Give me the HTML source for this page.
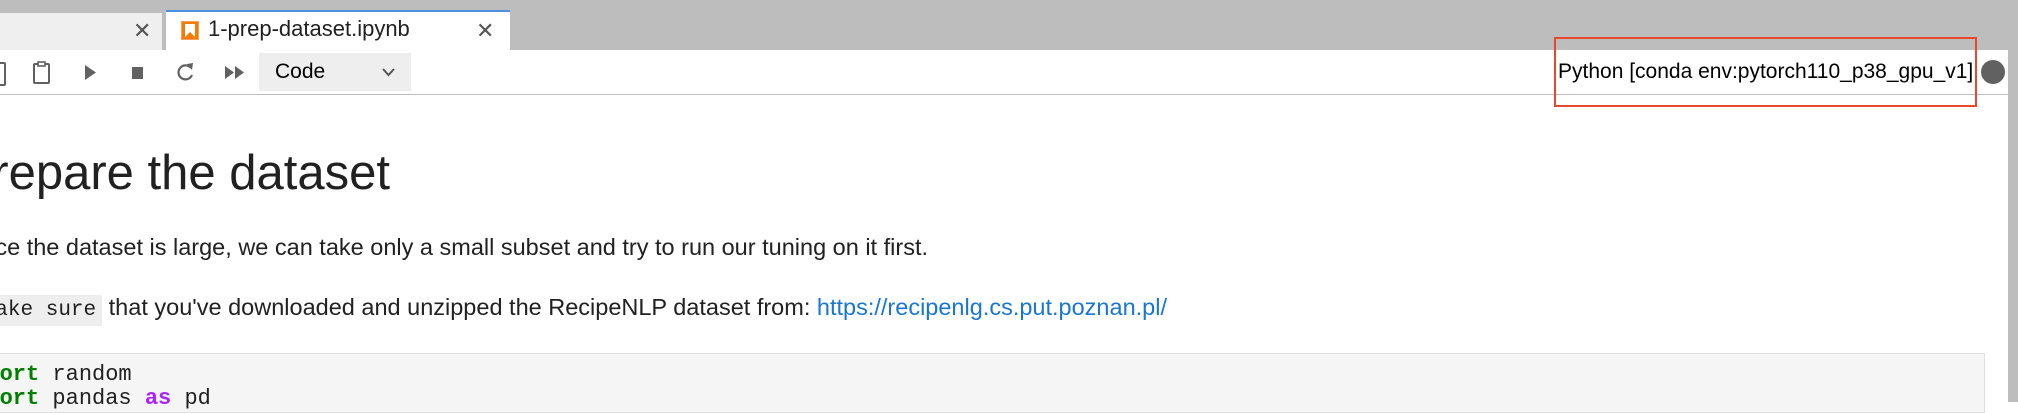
<!DOCTYPE html>
<html><head><meta charset="utf-8"><style>
body{margin:0;width:2018px;height:402px;overflow:hidden;background:#fff;position:relative;font-family:"Liberation Sans",Arial,sans-serif;color:#212121}
.a{position:absolute;white-space:nowrap}
</style></head><body>
<div class="a" style="left:0;top:0;width:2018px;height:50px;background:#bdbdbd"></div>
<div class="a" style="left:0;top:13px;width:162px;height:37px;background:#efefef"></div>
<div class="a" style="left:133px;top:18px;font-size:22px;color:#555">✕</div>
<div class="a" style="left:166px;top:10px;width:344px;height:40px;background:#fff;border-top:2px solid #4a90e2;box-sizing:border-box"></div>
<svg class="a" style="left:181px;top:21px" width="18" height="19" viewBox="0 0 18 19"><rect x="0.5" y="0.5" width="17" height="18" fill="#f57c00" stroke="#f0a060"/><path d="M4 3h10v13l-5-5-5 5z" fill="#fff"/></svg>
<div class="a" style="left:208px;top:16px;font-size:22px;color:#212121">1-prep-dataset.ipynb</div>
<div class="a" style="left:476px;top:18px;font-size:22px;color:#555">✕</div>
<div class="a" style="left:0;top:50px;width:2008px;height:44px;background:#fff;border-bottom:1px solid #bdbdbd"></div>
<div class="a" style="left:2008px;top:50px;width:10px;height:352px;background:#bdbdbd"></div>
<div class="a" style="left:-6px;top:62px;width:8px;height:20px;border:2px solid #616161;border-radius:2px"></div>
<svg class="a" style="left:33px;top:61px" width="17" height="23" viewBox="0 0 17 23"><rect x="1" y="3" width="15" height="19" fill="none" stroke="#616161" stroke-width="2" rx="1"/><rect x="5" y="1" width="7" height="4" fill="#fff" stroke="#616161" stroke-width="1.6"/></svg>
<svg class="a" style="left:85px;top:65px" width="12" height="15"><path d="M0 0L11 7.5L0 15z" fill="#616161"/></svg>
<div class="a" style="left:132px;top:67px;width:11px;height:12px;background:#616161"></div>
<svg class="a" style="left:176px;top:62px" width="19" height="21" viewBox="0 0 19 21"><path d="M15 6A7 7 0 1 0 16 13" fill="none" stroke="#616161" stroke-width="2.2"/><path d="M11 2L17 1L16 8z" fill="#616161"/></svg>
<svg class="a" style="left:225px;top:66px" width="19" height="13"><path d="M0 0L9 6.5L0 13zM10 0L19 6.5L10 13z" fill="#616161"/></svg>
<div class="a" style="left:259px;top:53px;width:152px;height:38px;background:#eee"></div>
<div class="a" style="left:275px;top:60px;font-size:21px;color:#000">Code</div>
<svg class="a" style="left:382px;top:68px" width="13" height="9"><path d="M1 1L6.5 7L12 1" fill="none" stroke="#555" stroke-width="2"/></svg>
<div class="a" style="left:1558px;top:60px;font-size:21px;color:#000">Python [conda env:pytorch110_p38_gpu_v1]</div>
<div class="a" style="left:1554px;top:37px;width:423px;height:70px;border:2px solid #e8472e;box-sizing:border-box"></div>
<div class="a" style="left:1981px;top:60px;width:24px;height:24px;border-radius:50%;background:#616161"></div>
<div class="a" style="right:1628px;top:145px;font-size:49px;color:#212121">Prepare the dataset</div>
<div class="a" style="right:1090px;top:234px;font-size:23.5px">Since the dataset is large, we can take only a small subset and try to run our tuning on it first.</div>
<div class="a" style="right:851px;top:294px;font-size:23.5px"><span style="font-family:'Liberation Mono',monospace;font-size:21px;background:#eee;padding:4px 6px">Make sure</span> that you've downloaded and unzipped the RecipeNLP dataset from: <span style="color:#1976d2">https://recipenlg.cs.put.poznan.pl/</span></div>
<div class="a" style="left:-2px;top:353px;width:1987px;height:60px;background:#f5f5f5;border:1px solid #e0e0e0;box-sizing:border-box"></div>
<div class="a" style="left:-40px;top:363px;font-family:'Liberation Mono',monospace;font-size:22px;line-height:24px;color:#212121"><span style="color:#008000;font-weight:bold">import</span> random<br><span style="color:#008000;font-weight:bold">import</span> pandas <span style="color:#aa22ff;font-weight:bold">as</span> pd</div>
</body></html>
